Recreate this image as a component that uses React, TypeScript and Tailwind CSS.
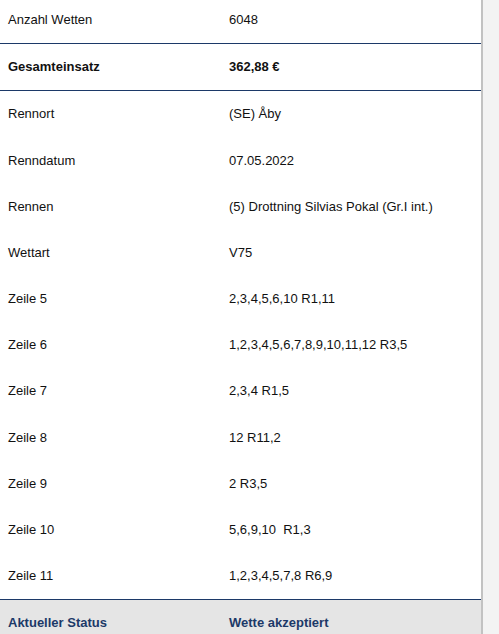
const rows: { label: string; value: string }[] = [
  { label: "Rennort", value: "(SE) Åby" },
  { label: "Renndatum", value: "07.05.2022" },
  { label: "Rennen", value: "(5) Drottning Silvias Pokal (Gr.I int.)" },
  { label: "Wettart", value: "V75" },
  { label: "Zeile 5", value: "2,3,4,5,6,10 R1,11" },
  { label: "Zeile 6", value: "1,2,3,4,5,6,7,8,9,10,11,12 R3,5" },
  { label: "Zeile 7", value: "2,3,4 R1,5" },
  { label: "Zeile 8", value: "12 R11,2" },
  { label: "Zeile 9", value: "2 R3,5" },
  { label: "Zeile 10", value: "5,6,9,10  R1,3" },
  { label: "Zeile 11", value: "1,2,3,4,5,7,8 R6,9" },
];

export default function App() {
  return (
    <div className="flex h-[634px] overflow-hidden bg-[#f3f3f3] font-['Liberation_Sans',Arial,sans-serif] text-[13px] text-[#111]">
      <div className="w-[481px] shrink-0 bg-white">
        <div className="flex h-[44px] items-center border-b border-[#1c3968]">
          <div className="w-[229px] pl-2 -mt-[3px]">Anzahl Wetten</div>
          <div className="-mt-[3px]">6048</div>
        </div>
        <div className="flex h-[47px] items-center border-b border-[#1c3968] font-bold">
          <div className="w-[229px] pl-2">Gesamteinsatz</div>
          <div>362,88 €</div>
        </div>
        {rows.map((row) => (
          <div key={row.label} className="flex h-[46.2px] items-center">
            <div className="w-[229px] pl-2">{row.label}</div>
            <div className="whitespace-pre">{row.value}</div>
          </div>
        ))}
        <div className="flex h-[46px] items-center border-t border-[#1c3968] bg-[#e5e5e5] font-bold text-[#1c3968]">
          <div className="w-[229px] pl-2">Aktueller Status</div>
          <div>Wette akzeptiert</div>
        </div>
      </div>
      <div className="w-[2px] shrink-0 bg-[#c2c2c2]" />
    </div>
  );
}
